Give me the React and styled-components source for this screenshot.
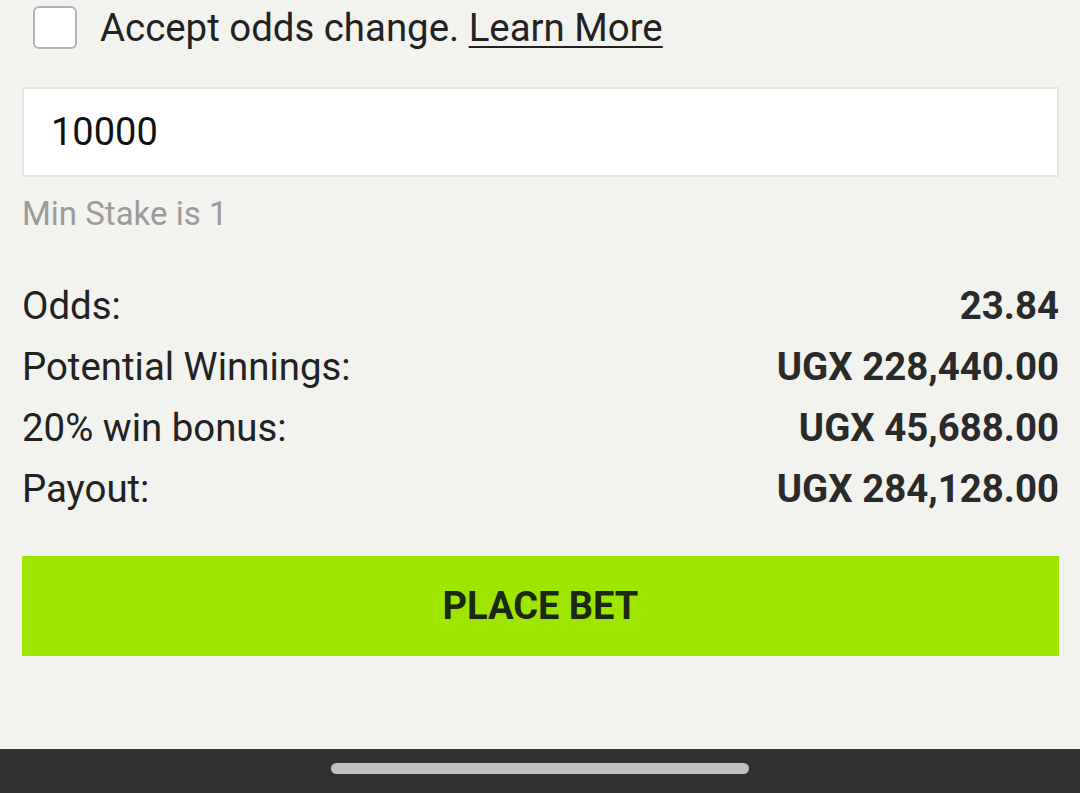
import React, { useState } from 'react';
import styled, { createGlobalStyle } from 'styled-components';

const GlobalStyle = createGlobalStyle`
    html, body {
        margin: 0;
        padding: 0;
        background: #f2f2ee;
    }
    * {
        box-sizing: border-box;
    }
`;

const Page = styled.div`
    min-height: 100vh;
    display: flex;
    flex-direction: column;
    background: #f2f2ee;
    font-family: Roboto, "Liberation Sans", Arial, sans-serif;
    color: #222;
`;

const Slip = styled.div`
    flex: 1;
    padding: 0 21px 0 22px;
`;

const AcceptRow = styled.label`
    height: 54px;
    display: flex;
    align-items: center;
    gap: 23px;
    padding-left: 11px;
    font-size: 38.4px;
    color: #222;
`;

const Check = styled.span`
    width: 44px;
    height: 43px;
    border: 2px solid #b3b3b1;
    border-radius: 6px;
    background: #fff;
`;

const LearnMore = styled.a`
    color: #222;
    text-decoration: underline;
    text-decoration-thickness: 2px;
    text-underline-offset: 5px;
`;

const StakeInput = styled.input`
    display: block;
    width: 100%;
    height: 90px;
    margin-top: 33px;
    padding: 0 0 0 27px;
    border: 2px solid #e4e4e1;
    background: #fff;
    font-family: Roboto, "Liberation Sans", Arial, sans-serif;
    font-size: 38px;
    color: #111;
    outline: none;
`;

const Hint = styled.div`
    margin-top: 17px;
    line-height: 40px;
    font-size: 33px;
    color: #9b9c9a;
`;

const Summary = styled.div`
    margin-top: 41px;
    display: flex;
    flex-direction: column;
`;

const Row = styled.div`
    height: 61px;
    display: flex;
    align-items: center;
    justify-content: space-between;
    font-size: 38.4px;
`;

const Label = styled.span`
    color: #222;
`;

const Value = styled.span`
    font-weight: 700;
    color: #2a2a2a;
`;

const PlaceBet = styled.button`
    display: block;
    width: 100%;
    height: 100px;
    margin-top: 37px;
    border: none;
    background: #9ee600;
    font-family: Roboto, "Liberation Sans", Arial, sans-serif;
    font-size: 38px;
    font-weight: 700;
    color: #1c2816;
`;

const NavBar = styled.div`
    height: 44px;
    background: #303133;
    border-top: 1px solid #3c3d3f;
    display: flex;
    justify-content: center;
    padding-top: 13px;
`;

const Handle = styled.div`
    width: 418px;
    height: 11px;
    border-radius: 6px;
    background: #c0c1c1;
`;

const rows = [
    ['Odds:', '23.84'],
    ['Potential Winnings:', 'UGX 228,440.00'],
    ['20% win bonus:', 'UGX 45,688.00'],
    ['Payout:', 'UGX 284,128.00'],
];

export default function App() {
    const [stake, setStake] = useState('10000');
    return (
        <Page>
            <GlobalStyle />
            <Slip>
                <AcceptRow>
                    <Check />
                    <span>
                        Accept odds change. <LearnMore href="#">Learn More</LearnMore>
                    </span>
                </AcceptRow>
                <StakeInput value={stake} onChange={e => setStake(e.target.value)} />
                <Hint>Min Stake is 1</Hint>
                <Summary>
                    {rows.map(([label, value]) => (
                        <Row key={label}>
                            <Label>{label}</Label>
                            <Value>{value}</Value>
                        </Row>
                    ))}
                </Summary>
                <PlaceBet>PLACE BET</PlaceBet>
            </Slip>
            <NavBar>
                <Handle />
            </NavBar>
        </Page>
    );
}
